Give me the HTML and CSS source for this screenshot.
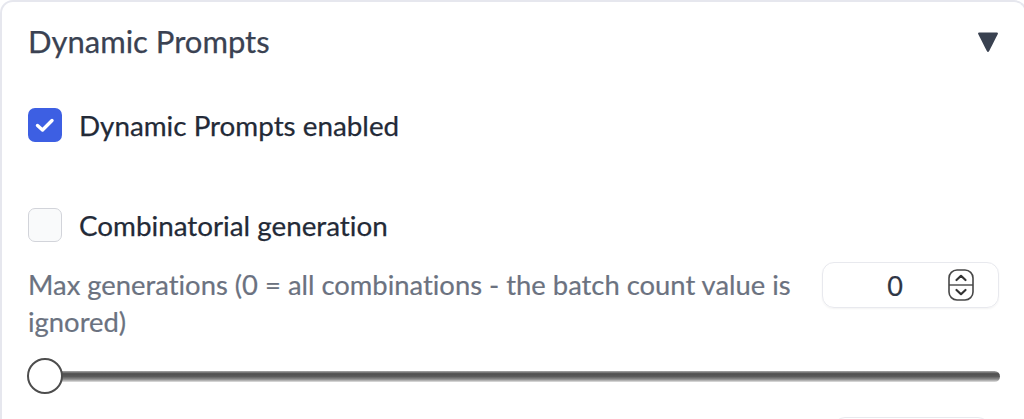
FILE: index.html
```html
<!DOCTYPE html>
<html>
<head>
<meta charset="utf-8">
<link rel="stylesheet" href="styles.css">
</head>
<body>
<div class="panel">
  <div class="header">
    <span class="title">Dynamic Prompts</span>
    <svg class="caret" width="22" height="22" viewBox="0 0 22 22"><path d="M2 1.5 H20 Q21.5 1.5 20.8 3 L12.2 20 Q11 22 9.8 20 L1.2 3 Q0.5 1.5 2 1.5 Z" fill="#394150"/></svg>
  </div>

  <label class="check-row first">
    <span class="box checked">
      <svg width="34" height="34" viewBox="0 0 34 34"><path d="M9.5 17.5 L14.5 22 L24 12.5" fill="none" stroke="#fff" stroke-width="3.4" stroke-linecap="round" stroke-linejoin="round"/></svg>
    </span>
    <span class="check-label">Dynamic Prompts enabled</span>
  </label>

  <label class="check-row second">
    <span class="box"></span>
    <span class="check-label">Combinatorial generation</span>
  </label>

  <div class="number-row">
    <div class="num-label">Max generations (0 = all combinations - the batch count value is<br>ignored)</div>
    <div class="num-input">
      <span class="num-value">0</span>
      <svg class="stepper" width="26" height="32" viewBox="0 0 26 32"><rect x="1" y="1" width="24" height="30" rx="8" fill="none" stroke="#474747" stroke-width="1.6"/><line x1="1" y1="16" x2="25" y2="16" stroke="#474747" stroke-width="1.4"/><path d="M8.5 11 L13 6.8 L17.5 11" fill="none" stroke="#333" stroke-width="2.2" stroke-linecap="round" stroke-linejoin="round"/><path d="M8.5 21 L13 25.2 L17.5 21" fill="none" stroke="#333" stroke-width="2.2" stroke-linecap="round" stroke-linejoin="round"/></svg>
    </div>
  </div>

  <div class="slider">
    <div class="track"></div>
    <div class="thumb"></div>
  </div>

  <div class="next-row">
    <div class="next-box"></div>
  </div>
</div>
</body>
</html>
```

FILE: styles.css
```css
html, body {
  margin: 0;
  padding: 0;
  background: #ffffff;
  overflow: hidden;
}

body {
  width: 1024px;
  height: 419px;
  font-family: Lato, "Noto Sans", "Liberation Sans", sans-serif;
  font-variant-ligatures: none;
}

.panel {
  box-sizing: border-box;
  width: 1027px;
  height: 419px;
  overflow: hidden;
  border: 2px solid #e6e7ee;
  border-bottom: none;
  border-radius: 13px 13px 0 0;
  padding: 0 26px;
  background: #ffffff;
}

.header {
  display: flex;
  align-items: center;
  justify-content: space-between;
  height: 78px;
}

.title {
  font-size: 31px;
  color: #3a4252;
  -webkit-text-stroke: 0.25px #3a4252;
}

.caret {
  display: block;
  margin-top: 2px;
}

.check-row {
  display: flex;
  align-items: center;
  gap: 17px;
  height: 34px;
}

.check-row.first {
  margin-top: 28px;
}

.check-row.second {
  margin-top: 66px;
}

.box {
  box-sizing: border-box;
  width: 34px;
  height: 34px;
  border-radius: 7px;
  border: 1.5px solid #d2d4da;
  background: #f9fafb;
  flex: none;
}

.box.checked {
  border: none;
  background: #3d5fe3;
}

.box svg {
  display: block;
}

.check-label {
  font-size: 27.8px;
  color: #232a37;
  -webkit-text-stroke: 0.25px #232a37;
}

.number-row {
  display: flex;
  align-items: flex-start;
  gap: 28px;
  margin-top: 20px;
}

.num-label {
  flex: 1;
  padding-top: 4px;
  font-size: 27.4px;
  line-height: 37px;
  color: #6b7280;
  -webkit-text-stroke: 0.2px #6b7280;
  white-space: nowrap;
}

.num-input {
  box-sizing: border-box;
  width: 177px;
  height: 46px;
  border: 1.5px solid #e8e9ee;
  border-radius: 12px;
  box-shadow: 0 1px 2px rgba(0, 0, 0, 0.05);
  display: flex;
  align-items: center;
  justify-content: flex-end;
  gap: 45px;
  padding-right: 24px;
  flex: none;
}

.num-value {
  font-size: 27px;
  color: #2e3645;
  -webkit-text-stroke: 0.2px #2e3645;
}

.stepper {
  display: block;
}

.slider {
  position: relative;
  height: 38px;
  margin-top: 17px;
  display: flex;
  align-items: center;
}

.track {
  flex: 1;
  margin-left: 20px;
  margin-right: -1px;
  height: 11px;
  border-radius: 6px;
  background: linear-gradient(#a8a8a8 0%, #4e4e4e 25%, #5a5a5a 50%, #8a8a8a 75%, #e2e2e2 100%);
}

.thumb {
  position: absolute;
  left: -1px;
  top: 1px;
  box-sizing: border-box;
  width: 36px;
  height: 36px;
  border-radius: 50%;
  border: 2px solid #4d4d4d;
  background: #ffffff;
}

.next-row {
  display: flex;
  justify-content: flex-end;
  margin-top: 22px;
  padding-right: 9px;
}

.next-box {
  box-sizing: border-box;
  width: 157px;
  height: 46px;
  border: 1.5px solid #e8e9ee;
  border-radius: 12px;
}
```
